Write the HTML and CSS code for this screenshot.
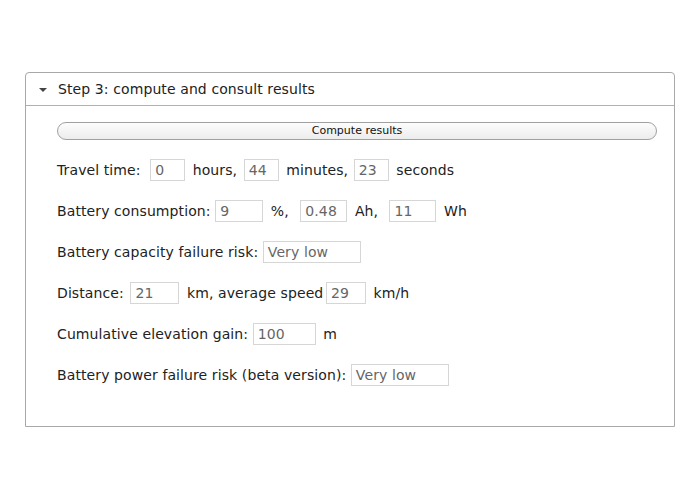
FILE: index.html
```html
<!DOCTYPE html>
<html>
<head>
<meta charset="utf-8">
<link rel="stylesheet" href="styles.css">
</head>
<body>
<div class="panel">
  <div class="panel-head">
    <span class="caret"></span>
    <span class="title">Step 3: compute and consult results</span>
  </div>
  <div class="panel-body">
    <button class="compute">Compute results</button>
    <div class="row">Travel time: <span class="field w35 ml5">0</span> hours, <span class="field w35">44</span> minutes, <span class="field w35 ml1">23</span> seconds</div>
    <div class="row">Battery consumption: <span class="field w48 ml0">9</span> <span class="unit-pct">%,</span> <span class="field w47">0.48</span> <span class="unit-ah">Ah,</span> <span class="field w47">11</span> Wh</div>
    <div class="row">Battery capacity failure risk: <span class="field w98 ml0">Very low</span></div>
    <div class="row">Distance: <span class="field w49">21</span> km, average speed <span class="field w40 mln2">29</span> km/h</div>
    <div class="row">Cumulative elevation gain: <span class="field w63 ml0">100</span> m</div>
    <div class="row">Battery power failure risk (beta version): <span class="field w98 ml0">Very low</span></div>
  </div>
</div>
</body>
</html>
```
FILE: styles.css
```css
html, body {
  margin: 0;
  padding: 0;
  background: #fff;
}
body {
  font-family: "DejaVu Sans", Verdana, sans-serif;
  font-size: 14px;
  letter-spacing: 0.1px;
  color: #222;
  padding-top: 72px;
  padding-left: 25px;
}
.panel {
  width: 648px;
  height: 353px;
  border: 1px solid #a8a8a8;
  border-radius: 4px 4px 0 0;
}
.panel-head {
  height: 32px;
  border-bottom: 1px solid #b0b0b0;
  display: flex;
  align-items: center;
  padding-left: 13px;
}
.caret {
  width: 0;
  height: 0;
  border-left: 4px solid transparent;
  border-right: 4px solid transparent;
  border-top: 4px solid #444;
  margin-right: 11px;
  margin-top: 1px;
}
.title {
  color: #222;
}
.panel-body {
  padding: 16px 17px 0 31px;
}
.compute {
  display: block;
  width: 600px;
  height: 18px;
  border: 1px solid #a0a0a0;
  border-radius: 9px;
  background: linear-gradient(#fdfdfd, #ececec);
  font-family: "DejaVu Sans", Verdana, sans-serif;
  font-size: 11px;
  letter-spacing: 0;
  color: #111;
  padding: 0;
  line-height: 16px;
  margin-bottom: 19px;
}
.row {
  height: 22px;
  line-height: 22px;
  margin-bottom: 19px;
  white-space: pre;
}
.field {
  display: inline-block;
  box-sizing: border-box;
  height: 22px;
  line-height: 20px;
  border: 1px solid #d6d6d6;
  padding: 0 4px;
  margin: 0 3px 0 2px;
  color: #666;
  vertical-align: top;
}
.ml0 { margin-left: 0; }
.mln2 { margin-left: -2px; }
.ml1 { margin-left: 1px; }
.ml5 { margin-left: 5px; }
.unit-pct {
  display: inline-block;
  width: 23px;
}
.unit-ah {
  display: inline-block;
  width: 28px;
}
.w35 { width: 35px; }
.w40 { width: 40px; }
.w47 { width: 47px; }
.w48 { width: 48px; }
.w49 { width: 49px; }
.w63 { width: 63px; }
.w98 { width: 98px; }
```
